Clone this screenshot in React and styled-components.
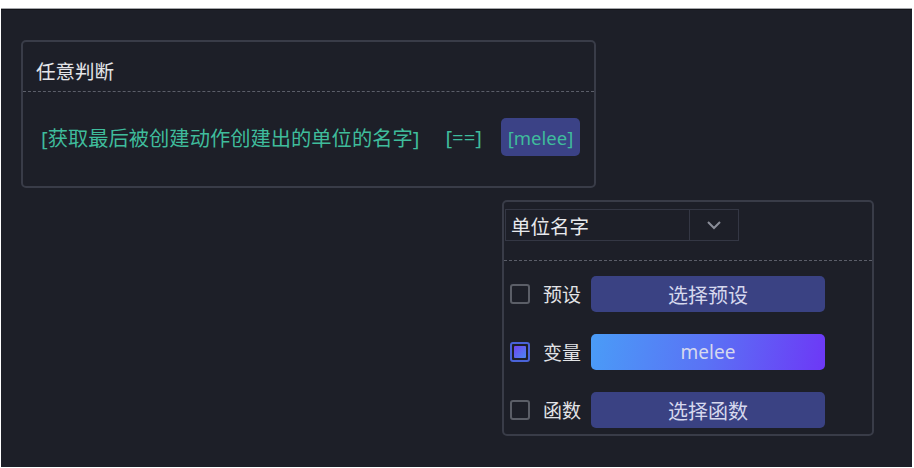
import React, { useState } from 'react';
import styled, { createGlobalStyle } from 'styled-components';

const GlobalStyle = createGlobalStyle`
  * { box-sizing: border-box; }
  body {
    margin: 0;
    background: #ffffff;
    font-family: "Noto Sans", "Noto Sans CJK SC", sans-serif;
  }
`;

const options = [
    { key: 'preset', label: '预设', value: '选择预设' },
    { key: 'variable', label: '变量', value: 'melee' },
    { key: 'func', label: '函数', value: '选择函数' },
];

export default function App() {
    const [mode, setMode] = useState('variable');

    return (
        <>
            <GlobalStyle />
            <Canvas>
                <ConditionCard>
                    <CardTitle>任意判断</CardTitle>
                    <ConditionRow>
                        <Expr>[获取最后被创建动作创建出的单位的名字]</Expr>
                        <Operator>[==]</Operator>
                        <ValueBadge>[melee]</ValueBadge>
                    </ConditionRow>
                </ConditionCard>

                <ParamCard>
                    <ParamHeader>
                        <SelectBox>
                            <SelectText>单位名字</SelectText>
                            <SelectArrow>
                                <svg width="16" height="10" viewBox="0 0 16 10">
                                    <polyline points="2,2 8,8 14,2" fill="none" stroke="#8a8d98" strokeWidth="2" />
                                </svg>
                            </SelectArrow>
                        </SelectBox>
                    </ParamHeader>
                    <OptionList>
                        {options.map(o => (
                            <OptionRow key={o.key} onClick={() => setMode(o.key)}>
                                <Check checked={mode === o.key} />
                                <OptionLabel>{o.label}</OptionLabel>
                                <OptionButton active={mode === o.key}>{o.value}</OptionButton>
                            </OptionRow>
                        ))}
                    </OptionList>
                </ParamCard>
            </Canvas>
        </>
    );
}

const Canvas = styled.div`
  margin: 8px 2px 0 1px;
  height: 459px;
  background: #1d1f28;
  border-top: 1px solid #a4a6aa;
  box-shadow: inset 0 1px 0 #121318;
  display: flex;
  flex-direction: column;
  padding: 31px 0 0 20px;
`;

const Card = styled.div`
  border: 2px solid #393c48;
  border-radius: 5px;
  background: #1d1f28;
`;

const ConditionCard = styled(Card)`
  width: 575px;
  height: 148px;
`;

const CardTitle = styled.div`
  height: 50px;
  padding: 8px 0 0 13px;
  display: flex;
  align-items: center;
  font-size: 19.5px;
  color: #e4e5e8;
  border-bottom: 1px dashed #5b5e69;
`;

const ConditionRow = styled.div`
  display: flex;
  align-items: center;
  padding: 26px 0 0 18px;
`;

const Expr = styled.span`
  font-size: 20.3px;
  color: #3fbc9c;
  white-space: nowrap;
`;

const Operator = styled.span`
  font-size: 20.3px;
  color: #3fbc9c;
  margin-left: 26px;
`;

const ValueBadge = styled.span`
  margin-left: 19px;
  width: 79px;
  height: 38px;
  display: flex;
  align-items: center;
  justify-content: center;
  background: #3b4286;
  border-radius: 5px;
  font-size: 18.5px;
  color: #3fbc9c;
`;

const ParamCard = styled(Card)`
  width: 372px;
  height: 236px;
  margin: 12px 0 0 481px;
`;

const ParamHeader = styled.div`
  padding: 7px 0 0 1px;
  height: 59px;
  border-bottom: 1px dashed #5b5e69;
`;

const SelectBox = styled.div`
  width: 234px;
  height: 32px;
  border: 1px solid #343744;
  display: flex;
`;

const SelectText = styled.div`
  flex: 1;
  display: flex;
  align-items: center;
  padding-left: 5px;
  font-size: 19.5px;
  color: #e8e9ec;
  border-right: 1px solid #343744;
`;

const SelectArrow = styled.div`
  width: 48px;
  display: flex;
  align-items: center;
  justify-content: center;
`;

const OptionList = styled.div`
  display: flex;
  flex-direction: column;
  gap: 22px;
  padding: 15px 0 0 6px;
`;

const OptionRow = styled.div`
  display: flex;
  align-items: center;
  cursor: pointer;
`;

const Check = styled.span`
  width: 20px;
  height: 20px;
  border: 2px solid ${props => props.checked ? '#4a63d8' : '#5b5e67'};
  border-radius: 3px;
  padding: 2px;
  display: flex;

  &::after {
    content: '';
    flex: 1;
    border-radius: 1px;
    background: ${props => props.checked ? 'linear-gradient(135deg, #7045ef, #4b86f2)' : 'transparent'};
  }
`;

const OptionLabel = styled.span`
  margin-left: 13px;
  font-size: 19px;
  color: #e2e3e6;
  width: 48px;
`;

const OptionButton = styled.div`
  width: 234px;
  height: 36px;
  border-radius: 5px;
  display: flex;
  align-items: center;
  justify-content: center;
  font-size: ${props => props.active ? '19px' : '20px'};
  color: #d6d8ee;
  background: ${props => props.active ? 'linear-gradient(100deg, #4a9cf7 0%, #5a72f5 50%, #6d38f6 100%)' : '#3a4283'};
`;
